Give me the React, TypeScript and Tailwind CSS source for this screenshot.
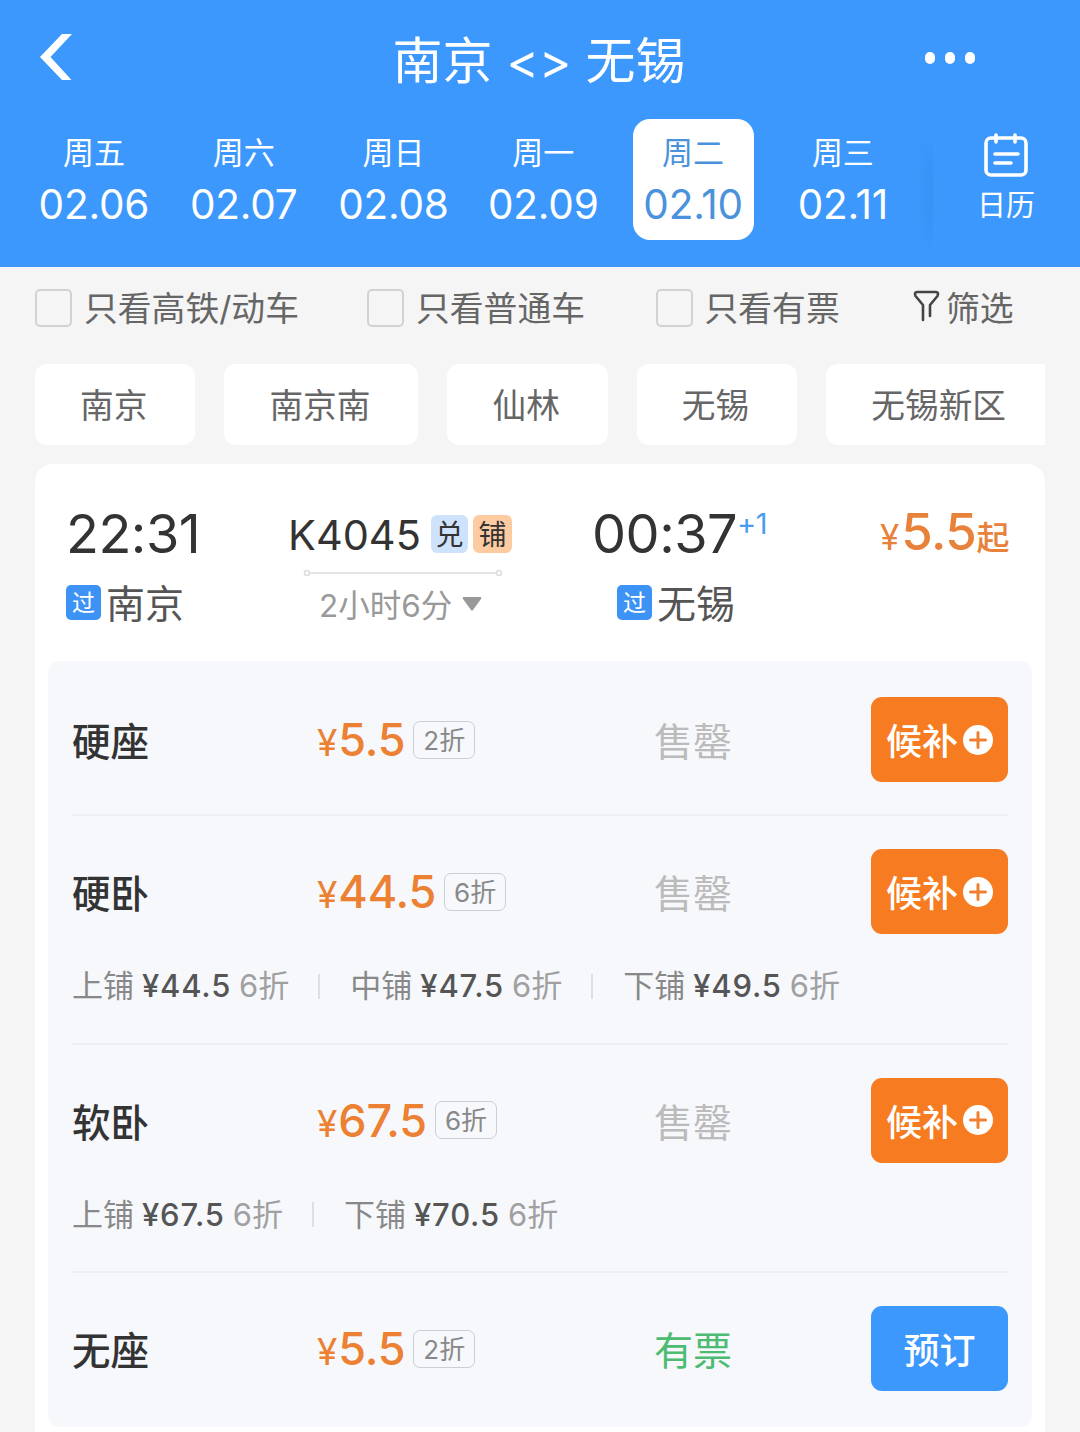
const days = [
  { week: "周五", date: "02.06" },
  { week: "周六", date: "02.07" },
  { week: "周日", date: "02.08" },
  { week: "周一", date: "02.09" },
  { week: "周二", date: "02.10", active: true },
  { week: "周三", date: "02.11" },
];

const stations = ["南京", "南京南", "仙林", "无锡", "无锡新区"];

type Berth = { name: string; price: string; discount: string };
type Seat = {
  name: string;
  price: string;
  discount: string;
  soldOut: boolean;
  berths?: Berth[];
};

const seats: Seat[] = [
  { name: "硬座", price: "5.5", discount: "2折", soldOut: true },
  {
    name: "硬卧",
    price: "44.5",
    discount: "6折",
    soldOut: true,
    berths: [
      { name: "上铺", price: "¥44.5", discount: "6折" },
      { name: "中铺", price: "¥47.5", discount: "6折" },
      { name: "下铺", price: "¥49.5", discount: "6折" },
    ],
  },
  {
    name: "软卧",
    price: "67.5",
    discount: "6折",
    soldOut: true,
    berths: [
      { name: "上铺", price: "¥67.5", discount: "6折" },
      { name: "下铺", price: "¥70.5", discount: "6折" },
    ],
  },
  { name: "无座", price: "5.5", discount: "2折", soldOut: false },
];

const Header = () => (
  <header className="h-[267px] bg-[#3c98fc] text-white">
    <div className="flex h-[119px] items-center justify-between pl-[38px] pr-[105px]">
      <svg width="36" height="50" viewBox="0 0 36 50" className="-mt-1">
        <path d="M24 1h10L12.500 24 33.500 47h-9.500L2 24z" fill="currentColor" />
      </svg>
      <h1 className="ml-[79px] mt-[2px] whitespace-pre text-[50px] leading-none">
        南京 <span className="text-[49px]">&lt;&gt;</span> 无锡
      </h1>
      <div className="-mt-1 flex gap-[10px]">
        <i className="h-[12px] w-[10px] rounded-full bg-white" />
        <i className="h-[12px] w-[10px] rounded-full bg-white" />
        <i className="h-[12px] w-[10px] rounded-full bg-white" />
      </div>
    </div>
    <div className="flex pl-[19px]">
      {days.map((day) => (
        <div key={day.date} className="flex w-[149.800px] justify-center">
          <div
            className={
              day.active
                ? "flex h-[121px] w-[121px] flex-col items-center rounded-[17px] bg-white pt-[16px] text-[#4b92dc]"
                : "flex h-[121px] w-[121px] flex-col items-center pt-[16px]"
            }
          >
            <span className="text-[31px] leading-[36px]">{day.week}</span>
            <span className="mt-[13px] text-[40.500px] leading-[42px] tracking-[-0.200px]">
              {day.date}
            </span>
          </div>
        </div>
      ))}
      {/* soft edge in front of the pinned calendar entry */}
      <div className="-mr-px mt-[18px] h-[115px] w-[15px] bg-gradient-to-r from-transparent to-[#3891f3] mask-y-from-60%" />
      <div className="flex flex-1 flex-col items-center pt-[13px]">
        <svg
          width="46"
          height="46"
          viewBox="0 0 46 46"
          fill="none"
          stroke="currentColor"
          strokeWidth="3.600"
          strokeLinecap="round"
        >
          <rect x="3" y="6" width="40" height="37" rx="5" />
          <path d="M13 3v7M32 3v7" />
          <path d="M12 22h23M12 31h16" />
        </svg>
        <span className="mt-[10px] text-[29px] leading-[36px]">日历</span>
      </div>
    </div>
  </header>
);

const CheckFilter = ({ label }: { label: string }) => (
  <label className="flex items-center gap-[12px]">
    <span className="h-[38px] w-[37px] rounded-[5px] border-2 border-[#d2d2d2]" />
    <span className="pt-px">{label}</span>
  </label>
);

const Filters = () => (
  <div className="flex h-[82px] items-center pl-[35px] text-[33.800px] leading-none text-[#666]">
    <div className="w-[332px]">
      <CheckFilter label="只看高铁/动车" />
    </div>
    <div className="w-[288.500px]">
      <CheckFilter label="只看普通车" />
    </div>
    <div className="w-[257.500px]">
      <CheckFilter label="只看有票" />
    </div>
    <div className="flex items-center gap-[6px]">
      <svg
        width="27"
        height="32"
        viewBox="0 0 27 32"
        fill="none"
        stroke="#444"
        strokeWidth="2.600"
        strokeLinecap="round"
        strokeLinejoin="round"
        className="-mt-[3px]"
      >
        <path d="M10 30V15L2.500 6Q1 2 4 2H23Q26 2 24.500 6L17 15V26" />
      </svg>
      <span className="pt-px">筛选</span>
    </div>
  </div>
);

const Stations = () => (
  <div className="mx-[35px] mt-[15px] flex gap-[29px] overflow-hidden">
    {stations.map((name) => (
      <div
        key={name}
        className="h-[81px] shrink-0 rounded-[12px] bg-white pl-[45px] pr-[48px] text-[33.700px] leading-[83px] text-[#666]"
      >
        {name}
      </div>
    ))}
  </div>
);

const PassBadge = () => (
  <span className="mb-[4px] h-[35px] w-[35px] rounded-[5px] bg-[#3d93f5] text-center text-[23px] leading-[36px] text-white">
    过
  </span>
);

const TrainSummary = () => (
  <div className="flex h-[197px] pl-[31px] pt-[40px] text-[#333]">
    <div className="w-[222px]">
      <div className="text-[54px] leading-[60px] tracking-[-0.500px]">22:31</div>
      <div className="mt-[14px] flex items-center gap-[5px] text-[39px] leading-[52px] text-[#555]">
        <PassBadge />
        南京
      </div>
    </div>
    <div className="w-[304px]">
      <div className="flex h-[60px] items-center">
        <span className="w-[143px] pt-[2px] text-[41.500px]">K4045</span>
        <span className="h-[38px] w-[37px] rounded-[6px] bg-[#cfe2fb] text-center text-[28px] leading-[40px]">
          兑
        </span>
        <span className="ml-[5px] h-[38px] w-[39px] rounded-[6px] bg-[#fdcba2] text-center text-[28px] leading-[40px]">
          铺
        </span>
      </div>
      <svg
        width="200"
        height="8"
        viewBox="0 0 200 8"
        className="ml-[15px] mt-[5px]"
        fill="none"
        stroke="#ddd"
        strokeWidth="1.600"
      >
        <circle cx="4" cy="4" r="2.500" />
        <path d="M6.500 4h187" />
        <circle cx="196" cy="4" r="2.500" />
      </svg>
      <div className="mt-[7px] flex items-center gap-[10px] pl-[31px] text-[31.500px] leading-[44px] text-[#999]">
        2小时6分
        <svg width="20" height="14" viewBox="0 0 20 14" className="-mt-1">
          <path d="M2 0h16q2 0 1 2l-8 11q-1 1-2 0L1 2q-1-2 1-2z" fill="#999" />
        </svg>
      </div>
    </div>
    <div className="w-[288px]">
      <div className="flex text-[54px] leading-[60px] tracking-[-0.500px]">
        00:37
        <span className="text-[29px] leading-[40px] text-[#4b9bf0]">+1</span>
      </div>
      <div className="ml-[25px] mt-[14px] flex items-center gap-[5px] text-[39px] leading-[52px] text-[#555]">
        <PassBadge />
        无锡
      </div>
    </div>
    <div className="-mt-[2px] flex h-[58px] items-baseline whitespace-nowrap text-[#e8813a]">
      <span className="text-[35px]">¥</span>
      <span className="ml-[2px] text-[51px] font-medium leading-[59px] tracking-[-0.500px]">5.5</span>
      <span className="text-[33px] font-medium">起</span>
    </div>
  </div>
);

const SeatRow = ({ seat }: { seat: Seat }) => (
  <div className="border-b-2 border-[#eeeff2] pt-[33px] last:border-b-0">
    <div className="grid h-[85px] grid-cols-[245px_337px_1fr_137px] items-center">
      <span className="pt-[7px] text-[38.500px] font-medium text-[#333]">{seat.name}</span>
      <div className="flex items-center">
        <div className="flex items-baseline pt-px text-[#ec8033]">
          <span className="text-[37px]">¥</span>
          <span className="ml-px text-[45px] font-medium tracking-[-0.200px]">{seat.price}</span>
        </div>
        <span className="ml-[8px] h-[38px] rounded-[7px] border-[1.500px] border-[#ccced2] px-[9px] text-[26px] leading-[37px] text-[#888]">
          {seat.discount}
        </span>
      </div>
      {seat.soldOut ? (
        <span className="pt-[6px] text-[39px] text-[#bbb]">售罄</span>
      ) : (
        <span className="pt-[6px] text-[39px] text-[#4dbb72]">有票</span>
      )}
      {seat.soldOut ? (
        <button className="flex h-[85px] items-center justify-center gap-[5px] rounded-[11px] bg-[#f77b20] text-[36px] font-medium leading-none text-white">
          <span className="pt-[5px]">候补</span>
          <svg width="30" height="30" viewBox="0 0 30 30">
            <circle cx="15" cy="15" r="15" fill="#fff" />
            <path
              d="M15 7.500v15M7.500 15h15"
              stroke="#f08030"
              strokeWidth="3"
              strokeLinecap="round"
            />
          </svg>
        </button>
      ) : (
        <button className="h-[85px] rounded-[11px] bg-[#3c98fc] pt-[5px] text-[36px] font-medium text-white">
          预订
        </button>
      )}
    </div>
    {seat.berths && (
      <div className="mt-[30px] flex items-center text-[31px] leading-[44px] text-[#888]">
        {seat.berths.map((berth, i) => (
          <div key={berth.name} className="flex items-center">
            {i > 0 && <i className="ml-[29px] mr-[30px] h-[25px] w-[2px] bg-[#dddfe3]" />}
            <span>{berth.name}</span>
            <span className="ml-[8px] font-medium tracking-[0.800px] text-[#555]">
              {berth.price}
            </span>
            <span className="ml-[8px] text-[#a0a0a0]">{berth.discount}</span>
          </div>
        ))}
      </div>
    )}
    <div className={seat.berths ? "h-[34.500px]" : "h-[32px]"} />
  </div>
);

const App = () => {
  return (
    <div
      lang="zh-CN"
      className="h-[1432px] w-[1080px] overflow-hidden bg-[#f5f5f5] font-['Inter','Noto_Sans_CJK_SC',sans-serif]"
    >
      <Header />
      <Filters />
      <Stations />
      <main className="mx-[35px] mt-[19px] h-[1000px] rounded-t-[18px] bg-white">
        <TrainSummary />
        <div className="mx-[13px] h-[766px] rounded-[12px] bg-[#f6f8fc] px-[24px] pt-[3px]">
          {seats.map((seat) => (
            <SeatRow key={seat.name} seat={seat} />
          ))}
        </div>
      </main>
    </div>
  );
};

export default App;
